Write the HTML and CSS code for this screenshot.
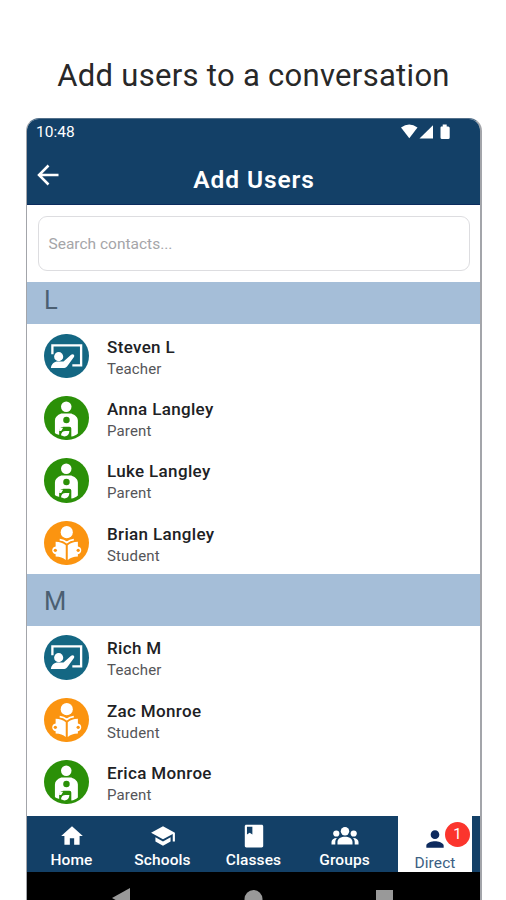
FILE: index.html
```html
<!DOCTYPE html>
<html lang="en">
<head>
<meta charset="utf-8">
<title>Add Users</title>
<link rel="stylesheet" href="styles.css">
</head>
<body>
<svg class="defs" aria-hidden="true">
  <symbol id="teacher" viewBox="0 0 44 44">
    <path fill="none" stroke="#fff" stroke-width="2.300" d="M8.300 20V11.200H36.700V31H28"/>
    <circle cx="14.500" cy="22.400" r="4.500" fill="#fff"/>
    <path fill="#fff" d="M6.800 33.700c.6-4.200 3-6.500 7-6.500h5.500l7.500-6.700c1.800-1.400 4 .3 2.800 2.300L23.500 31.200c-1 1.600-2 2.500-3.500 2.500z"/>
  </symbol>
  <symbol id="parent" viewBox="0 0 44 44">
    <circle cx="22" cy="10.700" r="5.200" fill="#fff"/>
    <path fill="#fff" d="M17 17.300h10c4 1.600 6.500 3.800 6.500 7V37c-2 1.800-4 2.600-6.500 3v-7.500c0-1.300-.5-2-2-2h-5.500c-2 0-3.500.8-4.500 2.800V38.500c-1.300-.3-3-.8-4.200-1.800V24.300c0-3.200 2.200-5.400 6.200-7z"/>
    <path fill="#fff" d="M15 31.500h4l-2 3h-2zM16.800 38.800c.3-3 1.700-4.300 4.500-4.300h3.800c-.2 3.500-1.800 5.200-5 5.600z"/>
    <circle cx="22.200" cy="23.800" r="3.200" fill="#2b9008"/>
  </symbol>
  <symbol id="student" viewBox="0 0 44 44">
    <circle cx="22.500" cy="11" r="6" fill="#fff"/>
    <path fill="#fff" d="M11.500 20.500c4.200.2 7.500 1.200 10 3.600V38.500c-2.500-2.300-5.800-3.400-10-3.500v-2.200c-4.500-.5-4.500-7 0-7.500zM33.500 20.500c-4.200.2-7.500 1.200-10 3.600V38.500c2.500-2.300 5.800-3.400 10-3.500v-2.200c4.500-.5 4.500-7 0-7.500z"/>
    <path fill="none" stroke="#fff" stroke-width="1.800" d="M15.500 18.500c3 .3 5 1.200 7 2.700 2-1.500 4-2.400 7-2.700"/>
    <circle cx="11.200" cy="29" r="1.600" fill="#fb9410"/>
    <circle cx="33.800" cy="29" r="1.600" fill="#fb9410"/>
  </symbol>
</svg>

<h1 class="headline"><span>Add users to a conversation</span></h1>

<div class="phone">
  <header class="top">
    <div class="status">
      <span class="time">10:48</span>
      <svg class="signals" width="50" height="16" viewBox="0 0 50 16" fill="#fff">
        <path d="M0 3.500Q8.200-2.500 16.500 3.500L8.300 14.300z"/>
        <path d="M18.500 14.500L32 1.200v13.300z"/>
        <path d="M40 2.500h1.700V.6h4v1.900h1.500q1.500 0 1.500 1.500v9.500q0 1.500-1.500 1.500H41q-1.500 0-1.500-1.500V3.500z"/>
      </svg>
    </div>
    <div class="titlebar">
      <svg class="back" width="22" height="22" viewBox="0 0 22 22" fill="none" stroke="#fff" stroke-width="2.500"><path d="M11.500 1.500L2 11l9.500 9.500M2 11h19.500"/></svg>
      <h2 class="title">Add Users</h2>
    </div>
  </header>

  <main class="content">
    <div class="search">Search contacts...</div>
    <h3 class="band band-first">L</h3>
    <ul class="list">
      <li class="row"><svg class="avatar teacher"><use href="#teacher"/></svg><div><p class="name">Steven L</p><p class="role">Teacher</p></div></li>
      <li class="row"><svg class="avatar parent"><use href="#parent"/></svg><div><p class="name">Anna Langley</p><p class="role">Parent</p></div></li>
      <li class="row"><svg class="avatar parent"><use href="#parent"/></svg><div><p class="name">Luke Langley</p><p class="role">Parent</p></div></li>
      <li class="row"><svg class="avatar student"><use href="#student"/></svg><div><p class="name">Brian Langley</p><p class="role">Student</p></div></li>
    </ul>
    <h3 class="band">M</h3>
    <ul class="list">
      <li class="row"><svg class="avatar teacher"><use href="#teacher"/></svg><div><p class="name">Rich M</p><p class="role">Teacher</p></div></li>
      <li class="row"><svg class="avatar student"><use href="#student"/></svg><div><p class="name">Zac Monroe</p><p class="role">Student</p></div></li>
      <li class="row"><svg class="avatar parent"><use href="#parent"/></svg><div><p class="name">Erica Monroe</p><p class="role">Parent</p></div></li>
    </ul>
  </main>

  <nav class="tabs">
    <div class="tab"><svg width="26" height="26" viewBox="0 0 24 24"><path d="M10 20v-6h4v6h5v-8h3L12 3 2 12h3v8z"/></svg><span>Home</span></div>
    <div class="tab"><svg width="26" height="26" viewBox="0 0 24 24"><path d="M5 13.180v4L12 21l7-3.820v-4L12 17zM12 3L1 9l11 6 9-4.910V17h2V9z"/></svg><span>Schools</span></div>
    <div class="tab"><svg width="26" height="26" viewBox="0 0 24 24"><path d="M19 1.500H5C4 1.500 3.500 2 3.500 3v18c0 1 .5 1.500 1.500 1.500h14c1 0 1.500-.5 1.500-1.500V3c0-1-.5-1.500-1.500-1.500zM5.500 3.500h5v7L8 9l-2.500 1.500z"/></svg><span>Classes</span></div>
    <div class="tab"><svg width="28" height="26" viewBox="0 0 28 26"><circle cx="14" cy="8.300" r="4.200"/><circle cx="5.300" cy="10.500" r="3.100"/><circle cx="22.700" cy="10.500" r="3.100"/><path d="M6.500 21.500v-2.500C6.500 12 21.500 12 21.500 19V21.500zM.5 21.500v-2.500c0-2.500 2-4 5.500-4.100-1.300 1.300-1.700 2.600-1.700 4.100V21.500zM27.500 21.500v-2.500c0-2.500-2-4-5.500-4.100 1.300 1.300 1.700 2.600 1.700 4.100V21.500z"/></svg><span>Groups</span></div>
    <div class="tab active"><svg width="26" height="26" viewBox="0 0 24 24"><path d="M12 12c2.210 0 4-1.790 4-4s-1.790-4-4-4-4 1.790-4 4 1.790 4 4 4zm0 2c-2.670 0-8 1.340-8 4v2h16v-2c0-2.660-5.330-4-8-4z"/></svg><span>Direct</span><b class="badge">1</b></div>
  </nav>
  <footer class="system">
    <svg width="453" height="29" viewBox="0 0 453 29" fill="#999"><path d="M85 26L103 16v20z"/><circle cx="226.500" cy="27" r="9"/><path d="M349 18h17v17h-17z"/></svg>
  </footer>
</div>
</body>
</html>
```
FILE: styles.css
```css
* { box-sizing: border-box; margin: 0; padding: 0; }
body { width: 506px; height: 900px; overflow: hidden; background: #fff; font-family: Roboto, sans-serif; color: #202124; }
.defs { display: none; }
.headline { height: 118px; padding: 56px 0 0 1px; text-align: center; font-size: 31px; line-height: 40px; font-weight: 400; letter-spacing: .3px; color: #282828; white-space: nowrap; }
.phone { display: flex; flex-direction: column; width: 456px; height: 782px; margin-left: 26px; border: 1px solid #a3a5aa; border-right-width: 2px; border-top-color: #53708a; border-bottom: 0; border-radius: 13px 13px 0 0; overflow: hidden; }
.top { flex: none; height: 86px; background: #134067; color: #fff; border-bottom: 1px solid #0b2c5d; }
.status { display: flex; justify-content: space-between; height: 28px; padding: 5px 29px 0 9px; }
.time { font-size: 15.500px; line-height: 17px; letter-spacing: 0; }
.titlebar { display: grid; grid-template-columns: 60px 1fr 60px; height: 57px; }
.back { margin: 17px 0 0 10px; }
.title { text-align: center; padding: 18px 0 0 1px; font-size: 24.500px; line-height: 30px; font-weight: 600; letter-spacing: .9px; }
.content { flex: none; height: 611px; }
.search { width: 432px; height: 55px; margin: 11px 0 11px 11px; padding: 0 9.500px; border: 1.500px solid #dddde0; border-radius: 9px; font-size: 15.500px; line-height: 55px; letter-spacing: 0; color: #a5a5a8; }
.band { height: 52px; padding-left: 17px; background: #a5bed8; font-size: 25.500px; line-height: 54px; font-weight: 400; color: #4b5f72; }
.band-first { height: 42px; line-height: 36px; }
.list { list-style: none; }
.row { display: flex; align-items: flex-start; height: 62.400px; padding: 9.600px 0 0 17px; gap: 18.500px; }
.avatar { flex: none; width: 44.500px; height: 44.500px; border-radius: 50%; }
.teacher { background: #146783; }
.parent { background: #2b9008; }
.student { background: #fb9410; }
.name { margin-top: 2px; font-size: 17px; line-height: 22px; font-weight: 500; letter-spacing: .34px; }
.role { font-size: 15px; line-height: 22px; letter-spacing: .15px; color: #555558; }
.tabs { flex: none; display: grid; grid-template-columns: 89px 93px 89px 93px 89px; grid-template-rows: 56px; height: 56px; background: #134067; }
.tab { position: relative; display: flex; flex-direction: column; align-items: center; padding-top: 7px; color: #fff; fill: #fff; font-size: 15.500px; line-height: 22px; letter-spacing: .1px; font-weight: 500; }
.tab svg { flex: none; }
.active { width: 74px; height: 56px; margin: 0 0 0 7px; padding-top: 10px; overflow: hidden; background: #fff; color: #3b6083; fill: #0d2a5e; font-weight: 400; }
.badge { position: absolute; left: 47px; top: 6px; width: 25px; height: 25px; border-radius: 50%; background: #fb352d; color: #fff; text-align: center; font-size: 15px; line-height: 25px; font-weight: 400; }
.system { flex: 1; background: #000; }
.system svg { display: block; }
```
